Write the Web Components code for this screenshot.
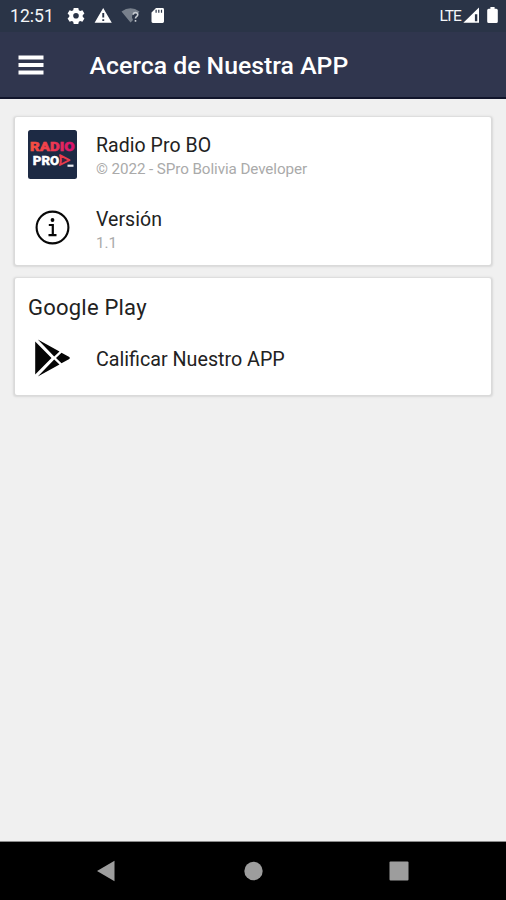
<!DOCTYPE html>
<html lang="es">
<head>
<meta charset="utf-8">
<title>Acerca de Nuestra APP</title>
<style>
html,body{margin:0;height:100%}
body{font-family:Roboto,"Noto Sans",sans-serif;background:#f0f0f0;overflow:hidden}
</style>
</head>
<body>
<about-screen></about-screen>
<script>
function define(name, html) {
  const t = document.createElement('template');
  t.innerHTML = html;
  customElements.define(name, class extends HTMLElement {
    constructor() {
      super();
      this.attachShadow({mode: 'open'}).append(t.content.cloneNode(true));
    }
  });
}

define('status-bar', `
<style>
:host{display:flex;align-items:center;height:32px;box-sizing:border-box;padding:0 7px 0 10px;background:#2a3447;color:#f4f6f8}
time{font-size:17.6px;line-height:32px;width:56px;white-space:nowrap}
svg{display:block;flex:none}
.lte{margin-left:auto;font-size:15.5px;line-height:30px;letter-spacing:-.9px;margin-right:1px}
</style>
<time>12:51</time>
<svg width="110" height="32" viewBox="66 0 110 32">
  <g fill="#fff">
    <path fill-rule="evenodd" d="M73.7 8h4.600l.5 2.300 1.400.8 2.200-.8 2 3.300-1.700 1.600v1.600l1.700 1.600-2 3.300-2.200-.8-1.400.8-.5 2.300h-4.600l-.5-2.300-1.400-.8-2.200.8-2-3.300 1.700-1.600v-1.600l-1.700-1.600 2-3.300 2.200.8 1.400-.8zM76 13a2.800 2.800 0 1 0 0 5.600 2.800 2.800 0 0 0 0-5.600z"/>
    <path fill-rule="evenodd" d="M103.200 8l8.600 14.800H94.600zM102.300 13v4.600h1.900V13zM102.300 19.200v1.900h1.900v-1.900z"/>
    <path fill-rule="evenodd" d="M156 8h6.600q1.400 0 1.400 1.400v12.200q0 1.400-1.400 1.400h-9.700q-1.400 0-1.400-1.400v-9.200zM155.500 9.800v3h1.200v-3zM158.200 9.800v3h1.200v-3zM160.900 9.800v3h1.200v-3z"/>
  </g>
  <path fill="#78808c" d="M121.500 11.400Q130.500 5 139.500 11.400L138 13.400Q132 12 132 17.500l1 2.500-2.500 2.500z"/>
  <path d="M133.200 14.800q.2-2.200 2.300-2.200t2.300 2q0 1.200-1.300 2.100-1 .7-1 1.900M135.500 20v1.800" fill="none" stroke="#c5cad0" stroke-width="1.600"/>
</svg>
<span class="lte">LTE</span>
<svg width="37" height="32" viewBox="462 0 37 32">
  <path fill="#fff" fill-rule="evenodd" d="M463.300 22.700L479 7.500v15.200zM474.900 14.200v7h2.400v-7z"/>
  <path fill="#fff" d="M490.400 7h4.200v1.700h1.700q1.500 0 1.500 1.500v11.400q0 1.500-1.500 1.500h-7.600q-1.500 0-1.500-1.500V10.200q0-1.500 1.500-1.500h1.700z"/>
</svg>`);

define('app-bar', `
<style>
:host{display:flex;align-items:center;height:67px;box-sizing:border-box;padding:0 18px;background:#30364e;border-bottom:2px solid #11152b;color:#fff}
svg{display:block;margin-right:45.500px}
h1{margin:0;padding-top:3px;font-size:24.800px;font-weight:500;line-height:32px;white-space:nowrap}
</style>
<svg width="26" height="20" viewBox="0 0 26 20"><path d="M.5 2.500h25M.5 10h25M.5 17.500h25" stroke="#fff" stroke-width="3.800"/></svg>
<h1><slot></slot></h1>`);

define('info-card', `
<style>
:host{display:block;box-sizing:border-box;background:#fff;border-radius:2px;box-shadow:0 .5px 2px 1.500px #d8d8d8;padding:0 13px}
</style>
<slot></slot>`);

define('card-heading', `
<style>
:host{display:block;font-size:22px;line-height:30px;padding-top:15px;color:#222;white-space:nowrap;letter-spacing:.22px}
</style>
<slot></slot>`);

define('info-row', `
<style>
:host{display:grid;grid-template-columns:68px 1fr;align-items:center}
.icon{display:flex;width:49px;justify-content:center}
.text{padding-top:var(--text-shift,0)}
.title{font-size:var(--title-size,19.500px);line-height:24px;color:#222;white-space:nowrap;letter-spacing:var(--title-ls,.05px)}
.sub{font-size:15.200px;line-height:23px;color:#aaa;white-space:nowrap;letter-spacing:-.08px}
</style>
<div class="icon"><slot name="icon"></slot></div>
<div class="text"><div class="title"><slot></slot></div><div class="sub"><slot name="sub"></slot></div></div>`);

define('radio-logo', `
<style>:host,svg{display:block}</style>
<svg width="49" height="49" viewBox="0 0 49 49">
  <defs><linearGradient id="g" x1="0" x2="1"><stop offset="0" stop-color="#f8503f"/><stop offset=".5" stop-color="#ee3b50"/><stop offset="1" stop-color="#d80d70"/></linearGradient></defs>
  <rect width="49" height="49" rx="2.500" fill="#1d2a44"/>
  <text x="2" y="21.200" textLength="44.500" lengthAdjust="spacingAndGlyphs" font-family="Roboto,sans-serif" font-weight="900" font-size="13.600" fill="url(#g)" stroke="url(#g)" stroke-width=".5">RADIO</text>
  <text x="4.800" y="34.800" textLength="26.500" lengthAdjust="spacingAndGlyphs" font-family="Roboto,sans-serif" font-weight="900" font-size="13" fill="#fff" stroke="#fff" stroke-width=".4">PRO</text>
  <path d="M32 25.200l9.500 5-9.500 4.800q2-4.800 0-9.800z" fill="#3a2440" stroke="#e93b4c" stroke-width="1.900" stroke-linejoin="round"/>
  <path d="M39.500 35.700h6" stroke="#e8e8ee" stroke-width="2.200"/>
</svg>`);

define('info-icon', `
<style>:host,svg{display:block}</style>
<svg width="36" height="36" viewBox="0 0 36 36">
  <circle cx="17.500" cy="17.500" r="15.900" fill="none" stroke="#080808" stroke-width="2.100"/>
  <circle cx="17.500" cy="10" r="1.900" fill="#080808"/>
  <path d="M13.800 15h4v9.800M13.500 25.200h8" fill="none" stroke="#080808" stroke-width="2.200"/>
</svg>`);

define('play-icon', `
<style>:host,svg{display:block}</style>
<svg width="36" height="38" viewBox="0 0 36 38">
  <path d="M.2 2.500L16.500 19 .2 35.500zM2.800.5L24.500 12.600 19.200 17.600zM2.800 37.500L24.500 25.500 19.200 20.500zM26.500 13.800l7.800 4.300q1.200.9 0 1.800L26.500 24.300 21 19z" fill="#050505"/>
</svg>`);

define('nav-bar', `
<style>
:host{display:block;background:#000;height:58px}
div{display:grid;grid-template-columns:1fr auto 1fr;align-items:center;height:58px;padding:0 96px;box-sizing:border-box}
svg{display:block}
svg:last-child{justify-self:end}
</style>
<div>
<svg width="20" height="22" viewBox="0 0 20 22"><path d="M1 11L18.500.7v20.600z" fill="#9d9d9d"/></svg>
<svg width="20" height="20" viewBox="0 0 20 20"><circle cx="10.500" cy="10" r="9.200" fill="#9d9d9d"/></svg>
<svg width="22" height="20" viewBox="0 0 22 20"><rect x="1.500" y=".5" width="19" height="19" rx="1" fill="#9d9d9d"/></svg>
</div>`);

define('about-screen', `
<style>
:host{display:flex;flex-direction:column;height:100vh;background:#f0f0f0}
main{flex:1;display:flex;flex-direction:column;gap:13px;padding:18px 15px 0;border-bottom:1px solid #8b8b8b}
.about{height:148px}
.store{height:117px}
.about info-row:first-child{height:75px;--text-shift:5px}
.about info-row:last-child{height:72px;--text-shift:6px}
.store info-row{height:70px;--text-shift:4px;--title-ls:0;--title-size:19.700px}
</style>
<status-bar></status-bar>
<app-bar>Acerca de Nuestra APP</app-bar>
<main>
  <info-card class="about">
    <info-row><radio-logo slot="icon"></radio-logo>Radio Pro BO<span slot="sub">© 2022 - SPro Bolivia Developer</span></info-row>
    <info-row><info-icon slot="icon"></info-icon>Versión<span slot="sub">1.1</span></info-row>
  </info-card>
  <info-card class="store">
    <card-heading>Google Play</card-heading>
    <info-row><play-icon slot="icon"></play-icon>Calificar Nuestro APP</info-row>
  </info-card>
</main>
<nav-bar></nav-bar>`);
</script>
</body>
</html>
